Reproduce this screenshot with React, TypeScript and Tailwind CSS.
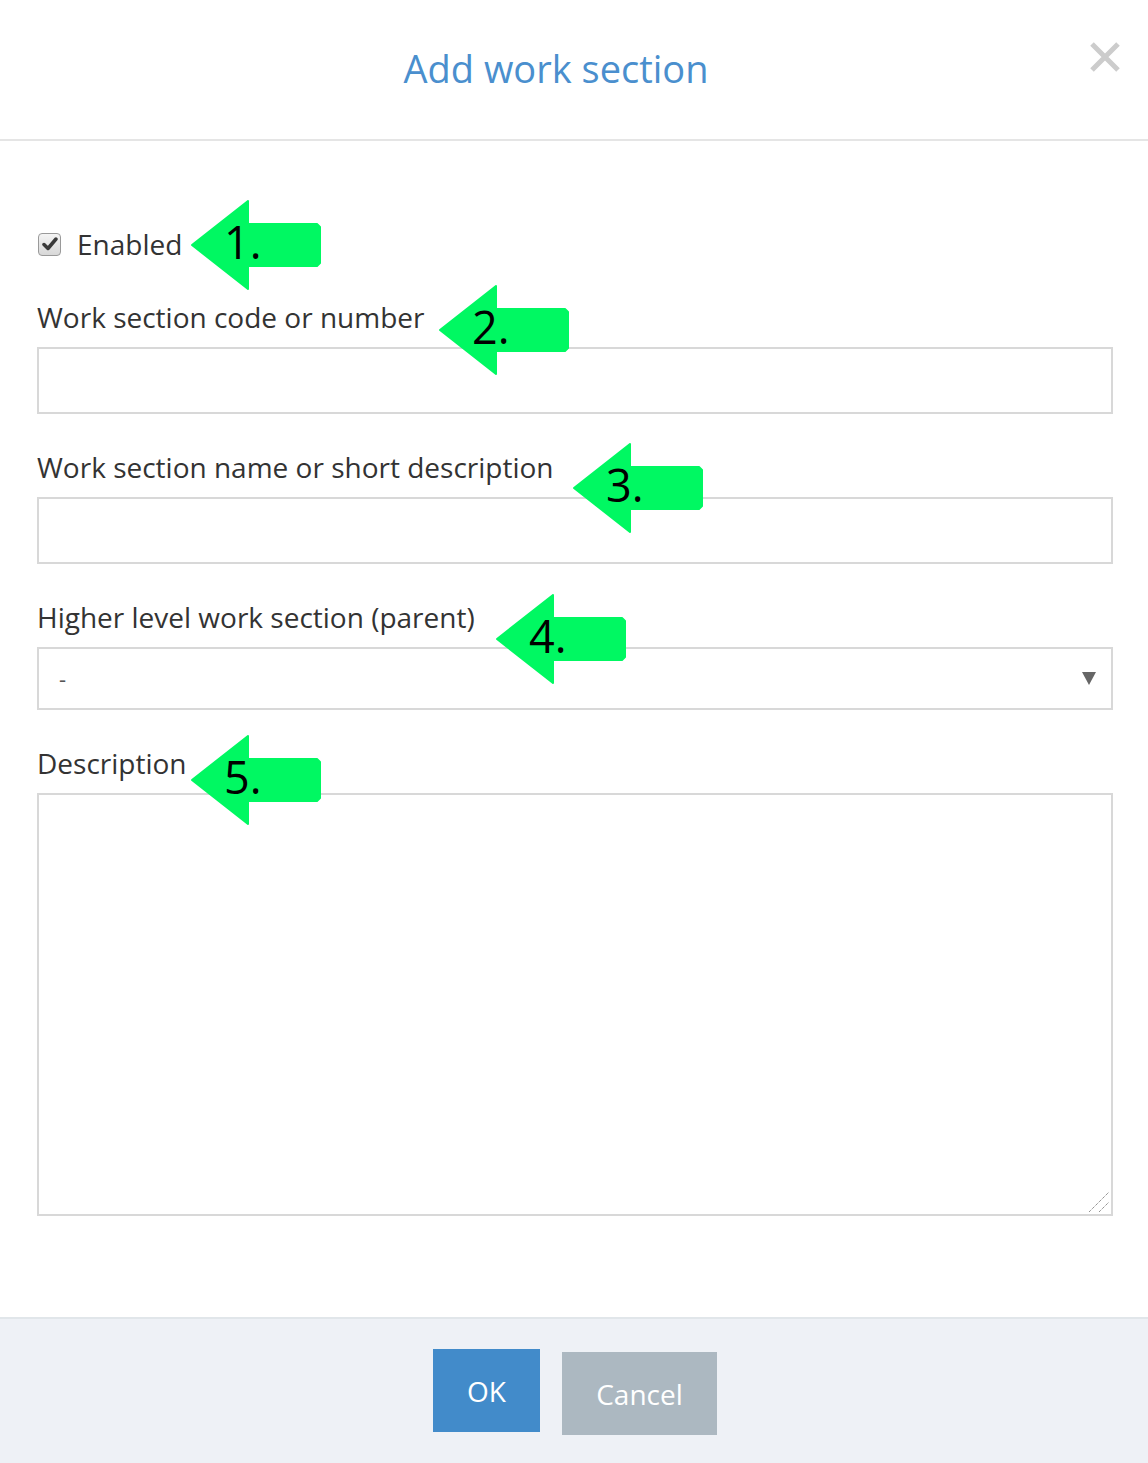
import React from "react";

const font = { fontFamily: '"Open Sans", "Noto Sans", sans-serif' };

const Arrow = ({ n, className }: { n: string; className: string }) => (
  <div className={"pointer-events-none absolute h-[90px] w-[130px] " + className}>
    <svg width="130" height="90" viewBox="0 0 130 90" className="absolute left-0 top-0">
      <polygon
        points="1,45 57,1 57,24 126,24 129,27 129,63 126,66 57,66 57,89"
        fill="#00f862"
        stroke="#00f862"
        strokeWidth="2"
        strokeLinejoin="round"
      />
    </svg>
    <span className="absolute left-[33px] top-[12px] text-[45px] leading-[60px] text-black">{n}</span>
  </div>
);

const Field = ({ label, first, children }: { label: string; first?: boolean; children: React.ReactNode }) => (
  <div className={first ? "mt-[37px] flex flex-col" : "mt-[35px] flex flex-col"}>
    <label className="text-[28px] leading-[36px] text-[#333]">{label}</label>
    <div className="mt-[12px]">{children}</div>
  </div>
);

export default function App() {
  return (
    <div className="relative flex h-[1463px] w-[1148px] flex-col bg-white" style={font}>
      <header className="relative flex h-[141px] items-center justify-center border-b-2 border-[#e5e5e5] pr-[36px]">
        <h1 className="mt-[-2px] text-[38px] font-normal text-[#4a8fce]">Add work section</h1>
        <button className="absolute right-[27px] top-[41px]">
          <svg width="32" height="32" viewBox="0 0 32 32">
            <path d="M3 3 L29 29 M29 3 L3 29" stroke="#cccccc" strokeWidth="5" />
          </svg>
        </button>
      </header>

      <main className="flex-1 pl-[37px] pr-[35px] pt-[85px]">
        <div className="flex h-[36px] items-center">
          <span className="ml-[1px] flex h-[23px] w-[23px] items-center justify-center rounded-[4px] border border-[#9a9a9a] bg-gradient-to-b from-[#f4f4f4] to-[#d8d8d8]">
            <svg width="16" height="14" viewBox="0 0 16 14">
              <path d="M2 7.5 L6 11.5 L14 2" stroke="#3a3a3a" strokeWidth="3.5" fill="none" strokeLinecap="round" strokeLinejoin="round" />
            </svg>
          </span>
          <span className="ml-[16px] text-[28px] leading-[36px] text-[#333]">Enabled</span>
        </div>

        <Field label="Work section code or number" first>
          <input className="h-[67px] w-full border-2 border-[#d8d8d8] px-4 text-[24px] outline-none" />
        </Field>

        <Field label="Work section name or short description">
          <input className="h-[67px] w-full border-2 border-[#d8d8d8] px-4 text-[24px] outline-none" />
        </Field>

        <Field label="Higher level work section (parent)">
          <div className="flex h-[63px] w-full items-center justify-between border-2 border-[#d8d8d8] pl-[20px] pr-[15px]">
            <span className="text-[22px] text-[#555]">-</span>
            <svg width="14" height="13" viewBox="0 0 14 13">
              <polygon points="0,0 14,0 7,13" fill="#666" />
            </svg>
          </div>
        </Field>

        <Field label="Description">
          <div className="relative">
            <textarea className="block h-[423px] w-full resize-none border-2 border-[#d8d8d8] p-3 text-[22px] outline-none" />
            <svg width="24" height="24" viewBox="0 0 24 24" className="pointer-events-none absolute bottom-[2px] right-[2px]">
              <path d="M2 22 L22 2 M12 22 L22 12" stroke="#666" strokeWidth="1" strokeDasharray="1 1" />
            </svg>
          </div>
        </Field>
      </main>

      <footer className="flex h-[146px] justify-center gap-[22px] border-t-2 border-[#e1e6ea] bg-[#eef1f6] pl-[2px] pt-[30px]">
        <button className="h-[83px] w-[107px] bg-[#428bca] text-[28px] text-white">OK</button>
        <button className="mt-[3px] h-[83px] w-[155px] bg-[#acb8c1] text-[28px] text-white">Cancel</button>
      </footer>

      <Arrow n="1." className="left-[191px] top-[200px]" />
      <Arrow n="2." className="left-[439px] top-[285px]" />
      <Arrow n="3." className="left-[573px] top-[443px]" />
      <Arrow n="4." className="left-[496px] top-[594px]" />
      <Arrow n="5." className="left-[191px] top-[735px]" />
    </div>
  );
}
